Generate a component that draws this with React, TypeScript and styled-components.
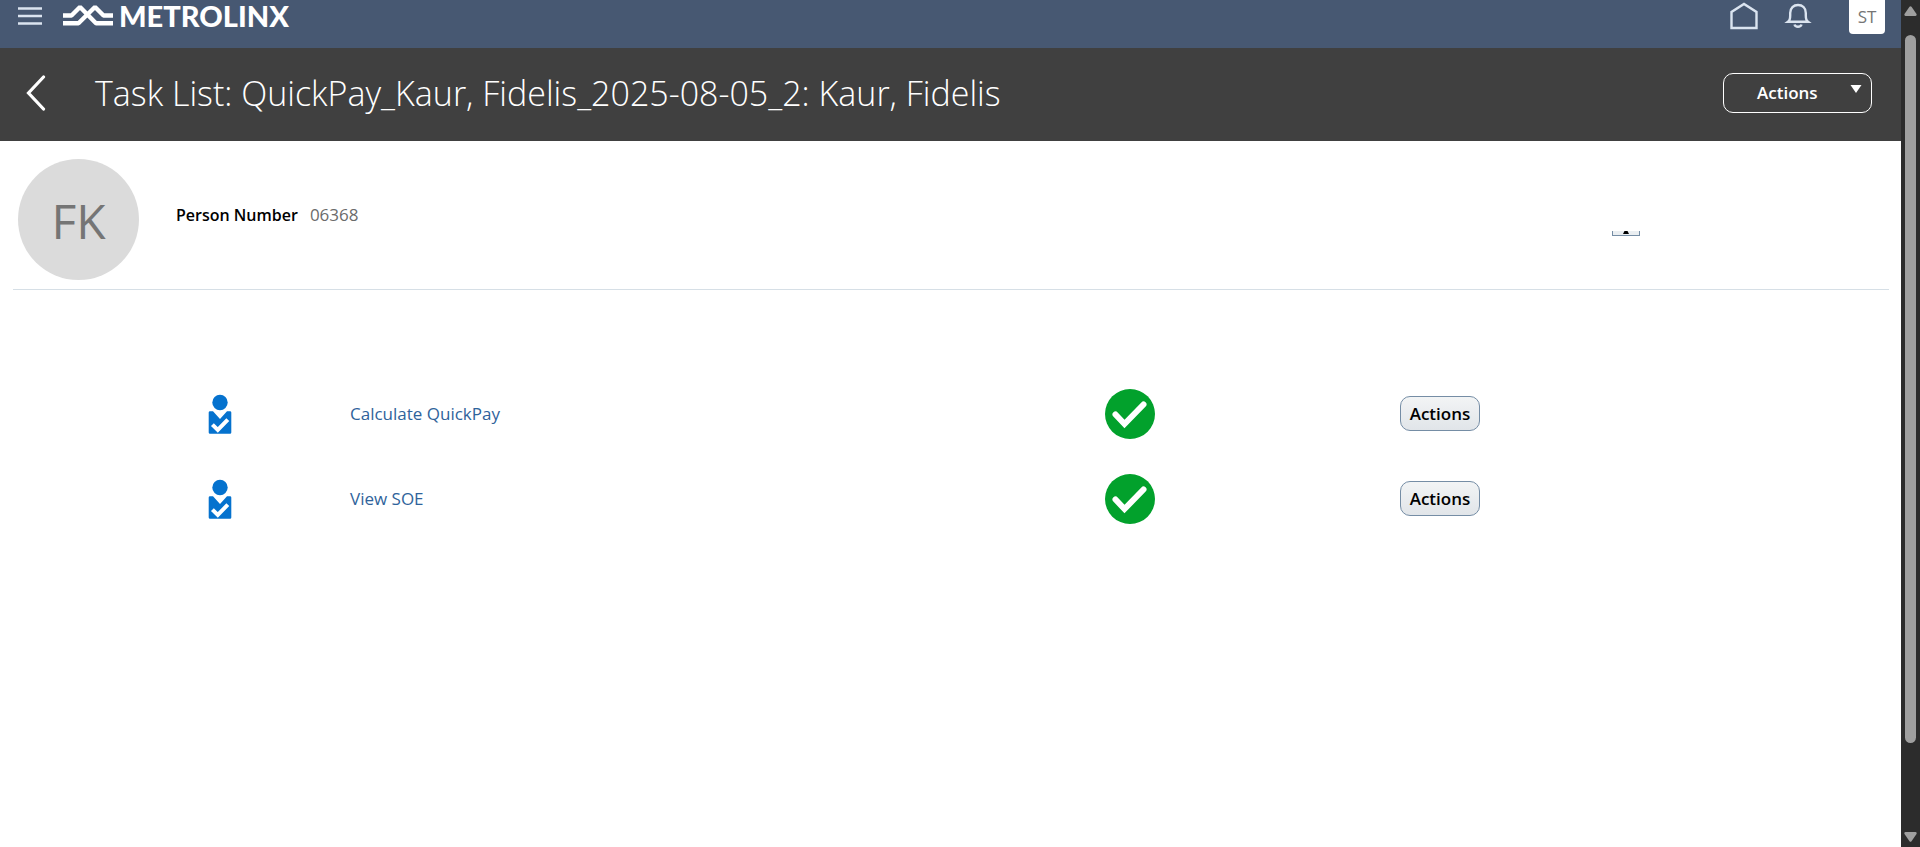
import React from "react";
import styled, { createGlobalStyle, css } from "styled-components";

const GlobalStyle = createGlobalStyle`
  *, *::before, *::after { box-sizing: border-box; }
  body {
    margin: 0;
    background: #fff;
    color: #000;
    font-family: "Segoe UI", "Open Sans", "Noto Sans", sans-serif;
    font-size: 16px;
    line-height: 24px;
  }
  svg { display: block; }
`;

const Shell = styled.div`
  display: flex;
  min-height: 100vh;
`;

const Page = styled.div`
  flex: 1;
  min-width: 0;
`;

const TopBar = styled.header`
  display: flex;
  align-items: flex-start;
  height: 48px;
  padding: 0 16px 0 18px;
  background: #475872;
  color: #dbe4f0;
`;

const IconButton = styled.button`
  display: flex;
  padding: 0;
  border: 0;
  background: none;
  color: inherit;
  cursor: pointer;
`;

const Brand = styled.a`
  display: flex;
  align-items: center;
  gap: 6px;
  height: 32px;
  margin-left: 21px;
  color: #fff;
  font-family: Lato, "Open Sans", sans-serif;
  font-size: 29px;
  font-weight: 900;
  line-height: 32px;
  text-decoration: none;
`;

const TopActions = styled.nav`
  display: flex;
  align-items: flex-start;
  gap: 24px;
  margin-left: auto;
`;

const UserBadge = styled.button`
  width: 36px;
  height: 34px;
  margin-left: 12px;
  padding: 0;
  border: 0;
  border-radius: 0 0 4px 4px;
  background: #fff;
  color: #757575;
  font: inherit;
  font-size: 17px;
  line-height: 32px;
`;

const TitleBar = styled.div`
  display: flex;
  align-items: center;
  height: 93px;
  padding: 0 29px 3px 26px;
  background: #404040;
  color: #fff;
`;

const Title = styled.h1`
  flex: 1;
  margin: 0 0 0 49px;
  font-size: 34px;
  font-weight: 300;
  line-height: 48px;
`;

const buttonText = css`
  font-family: inherit;
  font-size: 17px;
  font-weight: 600;
  line-height: 24px;
`;

const MenuButton = styled.button`
  ${buttonText}
  display: flex;
  align-items: center;
  justify-content: space-between;
  width: 149px;
  height: 40px;
  padding: 0 9px 0 33px;
  border: 1px solid #fff;
  border-radius: 10px;
  background: none;
  color: #fff;

  svg { margin-bottom: 8px; }
`;

const PersonPanel = styled.section`
  display: flex;
  align-items: center;
  height: 149px;
  margin: 0 12px 0 13px;
  padding: 18px 0 9px 5px;
  border-bottom: 1px solid #d6dfe6;
`;

const Avatar = styled.div`
  display: flex;
  align-items: center;
  justify-content: center;
  width: 121px;
  height: 121px;
  padding-top: 2px;
  border-radius: 50%;
  background: #dbdbdb;
  color: #757575;
  font-size: 48px;
  line-height: 64px;
`;

const PersonFacts = styled.dl`
  display: flex;
  flex: 1;
  gap: 12px;
  margin: 0 0 10px 37px;
`;

const FactLabel = styled.dt`
  font-weight: 600;
`;

const FactValue = styled.dd`
  margin: 0;
  color: #6b6b6b;
  font-size: 17px;
`;

const CollapseButton = styled.button`
  display: flex;
  justify-content: center;
  width: 28px;
  height: 5px;
  margin: 28px 249px 0 0;
  padding: 0;
  border: 1px solid #758da5;
  border-top: 0;
  background: #eaeef1;
`;

const TaskList = styled.ul`
  margin: 81px 0 0;
  padding: 0;
  list-style: none;
`;

const TaskRow = styled.li`
  display: grid;
  grid-template-columns: 142px 755fr 295fr 501fr;
  align-items: center;
  height: 85px;
  padding-left: 208px;
`;

const TaskLink = styled.a`
  color: #2f639b;
  font-size: 17px;
  font-weight: 500;
  text-decoration: none;
`;

const TaskButton = styled.button`
  ${buttonText}
  width: 80px;
  height: 35px;
  padding: 0;
  border: 1px solid #758da5;
  border-radius: 10px;
  background: linear-gradient(#f2f4f5, #e1e5e9);
  color: #000;
`;

const ScrollRail = styled.div`
  display: flex;
  flex-direction: column;
  align-items: center;
  width: 19px;
  padding: 6px 0 5px;
  background: #2c2c2c;
`;

const ScrollTrack = styled.div`
  flex: 1;
  margin: 19px 0 2px;
`;

const ScrollThumb = styled.div`
  width: 11px;
  height: 89%;
  border-radius: 6px;
  background: #9f9f9f;
`;

const PersonCheckIcon = () => (
  <svg width="24" height="40" viewBox="0 0 24 40" aria-hidden="true">
    <circle cx="12" cy="8.5" r="7.7" fill="#0572ce" />
    <path d="M2 17.2h3L12 25l7-7.8h3a1.3 1.3 0 0 1 1.3 1.3v20a1.3 1.3 0 0 1-1.3 1.3H2a1.3 1.3 0 0 1-1.3-1.3v-20A1.3 1.3 0 0 1 2 17.2z" fill="#0572ce" />
    <path d="M4.4 30.600l5.400 5.400L19.800 25.6" fill="none" stroke="#fff" strokeWidth="4" />
  </svg>
);

const DoneIcon = () => (
  <svg width="50" height="50" viewBox="0 0 50 50" role="img" aria-label="Completed">
    <circle cx="25" cy="25" r="25" fill="#02a12c" />
    <path d="M10.5 25.5l9 9.5L38.5 15.500" fill="none" stroke="#fff" strokeWidth="6" strokeLinecap="round" />
  </svg>
);

const tasks = ["Calculate QuickPay", "View SOE"];

export default function App() {
  return (
    <>
      <GlobalStyle />
      <Shell>
        <Page>
          <TopBar>
            <IconButton type="button" aria-label="Navigator">
              <svg width="24" height="32" viewBox="0 0 24 32" stroke="currentColor" strokeWidth="2.400">
                <path d="M0 8.5h24M0 16h24M0 23.5h24" />
              </svg>
            </IconButton>
            <Brand href="#">
              <svg width="50" height="32" viewBox="0 0 50 32" fill="none" stroke="#fff" strokeWidth="4.400" strokeLinejoin="bevel" aria-hidden="true">
                <path d="M0 15.5h8.5l8.500-8.500L33 23.300h17" />
                <path d="M0 23.300h15.5L32 7l8.500 8.500H50" />
              </svg>
              METROLINX
            </Brand>
            <TopActions>
              <IconButton type="button" aria-label="Home">
                <svg width="30" height="32" viewBox="0 0 30 32" fill="none" stroke="currentColor" strokeWidth="2.400">
                  <path d="M2.500 28V12L15 4l12.500 8v16z" />
                </svg>
              </IconButton>
              <IconButton type="button" aria-label="Notifications">
                <svg width="30" height="32" viewBox="0 0 30 32" fill="none" stroke="currentColor" strokeWidth="2.400">
                  <path d="M5 21.800c2.200-1.600 2.200-3.200 2.200-6.400v-2.400c0-5 3.400-8 7.800-8s7.800 3 7.800 8v2.400c0 3.200 0 4.800 2.200 6.400z" />
                  <path d="M11.500 24.500a3.600 3 0 0 0 7 0" />
                </svg>
              </IconButton>
              <UserBadge type="button">ST</UserBadge>
            </TopActions>
          </TopBar>
          <TitleBar>
            <IconButton type="button" aria-label="Back">
              <svg width="20" height="36" viewBox="0 0 20 36" fill="none" stroke="#fff" strokeWidth="3.200" strokeLinecap="round">
                <path d="M17.500 2L2.500 18l15 16" />
              </svg>
            </IconButton>
            <Title>Task List: QuickPay_Kaur, Fidelis_2025-08-05_2: Kaur, Fidelis</Title>
            <MenuButton type="button">
              Actions
              <svg width="12" height="8" viewBox="0 0 12 8" fill="#fff" aria-hidden="true">
                <path d="M0.500 0h11L6 8z" />
              </svg>
            </MenuButton>
          </TitleBar>
          <main>
            <PersonPanel>
              <Avatar>FK</Avatar>
              <PersonFacts>
                <FactLabel>Person Number</FactLabel>
                <FactValue>06368</FactValue>
              </PersonFacts>
              <CollapseButton type="button" aria-label="Collapse">
                <svg width="6" height="3" viewBox="0 0 6 3" aria-hidden="true">
                  <path d="M1.500 0h3L6 3H0z" />
                </svg>
              </CollapseButton>
            </PersonPanel>
            <TaskList>
              {tasks.map((task) => (
                <TaskRow key={task}>
                  <PersonCheckIcon />
                  <div>
                    <TaskLink href="#">{task}</TaskLink>
                  </div>
                  <DoneIcon />
                  <TaskButton type="button">Actions</TaskButton>
                </TaskRow>
              ))}
            </TaskList>
          </main>
        </Page>
        <ScrollRail aria-hidden="true">
          <svg width="13" height="10" viewBox="0 0 13 10" fill="#9f9f9f">
            <path d="M5.500 0.800q1-1.200 2 0l5 7.200q.6 1.800-1 2H1.500q-1.600-.2-1-2z" />
          </svg>
          <ScrollTrack>
            <ScrollThumb />
          </ScrollTrack>
          <svg width="13" height="10" viewBox="0 0 13 10" fill="#9f9f9f">
            <path d="M5.500 9.200q1 1.200 2 0l5-7.200q.6-1.800-1-2H1.500q-1.600.2-1 2z" />
          </svg>
        </ScrollRail>
      </Shell>
    </>
  );
}
